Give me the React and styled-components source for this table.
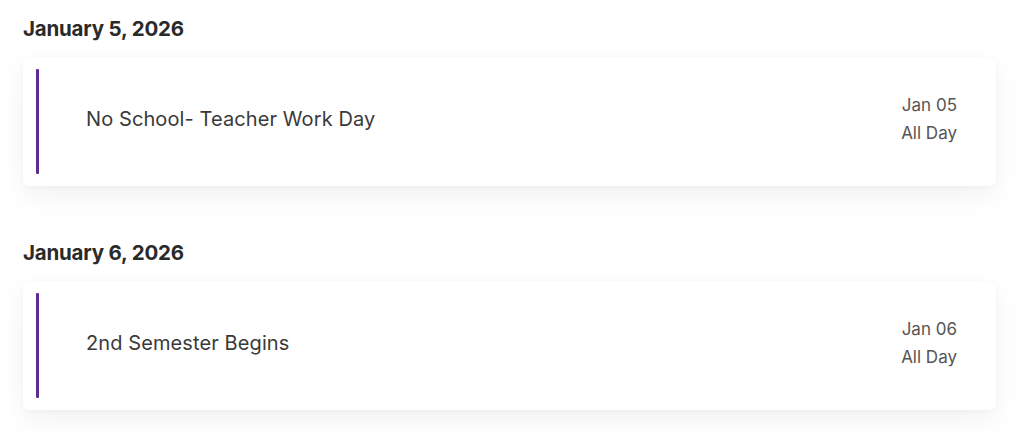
import React from "react";
import styled, { createGlobalStyle } from "styled-components";

const Global = createGlobalStyle`
  html, body { margin: 0; padding: 0; background: #ffffff; }
  body { font-family: Inter, "Liberation Sans", Arial, sans-serif; -webkit-font-smoothing: antialiased; }
`;

const Page = styled.div`
  padding: 17px 28px 22px 23px;
`;

const Section = styled.section`
  margin-bottom: 55px;
  &:last-child { margin-bottom: 0; }
`;

const DayHeading = styled.h2`
  margin: 0 0 16px;
  font-size: 20.5px;
  line-height: 24px;
  font-weight: 700;
  color: #2a2a2a;
  letter-spacing: -0.2px;
`;

const Card = styled.div`
  display: flex;
  align-items: stretch;
  background: #fff;
  border-radius: 6px;
  padding: 12px 39px 12px 13px;
  box-shadow: 0 10px 28px rgba(0, 0, 0, 0.055), 0 1px 4px rgba(0, 0, 0, 0.03);
`;

const Accent = styled.div`
  width: 3px;
  min-height: 105px;
  border-radius: 1px;
  background: ${(p) => p.$color || "#5e2a8f"};
`;

const Body = styled.div`
  flex: 1;
  display: flex;
  align-items: center;
  justify-content: space-between;
  padding-left: 47px;
`;

const Title = styled.div`
  font-size: 20px;
  line-height: 24px;
  color: #3a3a3a;
  letter-spacing: 0.1px;
  margin-top: -6px;
`;

const When = styled.div`
  text-align: right;
  font-size: 17px;
  line-height: 28px;
  color: #555;
  margin-top: -5px;
`;

const events = [
  { day: "January 5, 2026", title: "No School- Teacher Work Day", date: "Jan 05", time: "All Day" },
  { day: "January 6, 2026", title: "2nd Semester Begins", date: "Jan 06", time: "All Day" },
];

export default function App() {
  return (
    <>
      <Global />
      <Page>
        {events.map((e) => (
          <Section key={e.day}>
            <DayHeading>{e.day}</DayHeading>
            <Card>
              <Accent />
              <Body>
                <Title>{e.title}</Title>
                <When>
                  <div>{e.date}</div>
                  <div>{e.time}</div>
                </When>
              </Body>
            </Card>
          </Section>
        ))}
      </Page>
    </>
  );
}
